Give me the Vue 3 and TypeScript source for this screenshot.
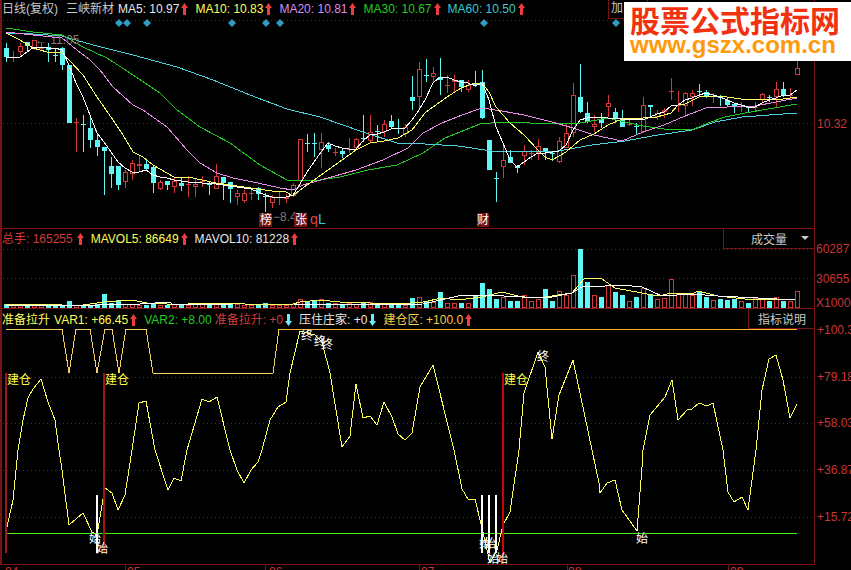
<script setup lang="ts">
type Kind = 'c' | 'r' | 'f'
type Candle = [number, number, number, number, Kind]

// high, body top, body bottom, low, kind (c cyan, r hollow red, f filled red)
const rawCandles: Candle[] = [
  [43,48,57,62,'c'],[51,57,57,62,'r'],[43,46,52,55,'r'],[42,42,46,52,'c'],[40,40,49,50,'r'],[43,47,49,50,'f'],
  [43,47,50,62,'c'],[48,55,55,62,'c'],[47,48,65,70,'c'],[65,65,123,123,'c'],[118,122,122,152,'r'],[115,124,124,152,'c'],
  [115,128,140,148,'c'],[133,140,147,156,'c'],[147,147,151,195,'c'],[157,166,174,188,'c'],[166,166,185,190,'c'],[170,172,182,188,'r'],
  [160,163,174,180,'r'],[155,164,166,172,'f'],[160,164,169,170,'c'],[166,167,183,193,'c'],[180,182,189,190,'r'],[181,181,185,190,'c'],
  [177,181,187,193,'r'],[178,183,186,191,'c'],[176,184,185,197,'f'],[178,184,187,197,'r'],[176,181,182,187,'f'],[182,184,184,195,'c'],
  [164,176,189,189,'r'],[177,177,183,200,'c'],[182,182,189,203,'c'],[190,193,197,205,'r'],[190,193,201,203,'r'],[190,193,193,200,'r'],
  [187,188,194,200,'c'],[193,196,196,212,'c'],[195,197,203,208,'r'],[192,197,197,205,'r'],[194,197,199,203,'r'],[183,185,196,197,'r'],
  [139,139,181,185,'r'],[134,143,143,152,'c'],[133,143,143,157,'c'],[133,142,150,168,'r'],[142,145,149,152,'c'],[148,152,152,156,'f'],
  [148,151,154,158,'c'],[138,149,149,153,'r'],[138,139,148,150,'r'],[115,138,138,142,'c'],[115,132,141,143,'r'],[125,131,131,142,'c'],
  [120,124,132,137,'r'],[115,121,127,128,'c'],[119,128,128,134,'c'],[124,127,134,137,'r'],[76,97,101,110,'c'],[62,69,97,110,'r'],
  [59,75,75,82,'c'],[67,73,77,83,'r'],[58,77,80,95,'c'],[75,85,85,93,'r'],[75,80,82,92,'f'],[80,80,87,92,'c'],
  [80,85,90,92,'r'],[71,84,84,87,'c'],[70,82,118,119,'c'],[140,140,170,170,'c'],[172,178,178,202,'c'],[145,160,167,178,'r'],
  [150,157,163,163,'c'],[165,166,168,173,'c'],[145,151,156,165,'r'],[150,153,153,160,'r'],[139,146,153,160,'r'],[148,148,152,160,'c'],
  [152,153,153,161,'c'],[137,141,162,163,'r'],[123,133,148,148,'r'],[83,95,133,137,'r'],[64,97,112,113,'c'],[102,113,122,123,'c'],
  [115,124,127,132,'r'],[113,119,123,128,'c'],[95,103,107,117,'r'],[108,112,118,123,'c'],[110,119,127,127,'c'],[120,124,124,126,'r'],
  [123,126,126,134,'c'],[97,105,132,133,'r'],[105,105,107,118,'c'],[110,113,117,120,'r'],[108,110,112,118,'f'],[78,91,91,100,'r'],
  [91,105,105,112,'r'],[92,93,106,117,'r'],[90,93,97,106,'r'],[84,91,91,97,'c'],[90,92,97,98,'c'],[93,96,96,103,'r'],
  [95,97,97,106,'c'],[97,100,105,107,'c'],[104,104,107,113,'c'],[102,106,106,112,'r'],[106,106,108,112,'c'],[102,107,107,112,'r'],
  [93,94,100,103,'r'],[95,97,97,102,'c'],[82,89,97,107,'r'],[82,89,95,97,'c'],[88,95,95,100,'r'],[61,68,75,75,'r'],
]

const stepX = (i: number) => 6 + i * 7

const candles = rawCandles.map(([high, top, bottom, low, kind], i) => ({
  x: stepX(i), high, top, bottom, low, kind,
}))

const maLines = [
  { color: '#4fd0dc', points: '6,33 33,34 62,36 93,45 133,55 177,67 213,80 250,95 287,109 320,117 363,132 397,143 425,144 458,146 492,151 525,152 558,151 592,145 625,141 658,135 692,130 715,122 742,117 797,113' },
  { color: '#22c522', points: '6,28 33,32 62,35 83,47 107,58 133,75 160,93 177,110 200,127 230,143 260,165 287,180 313,181 340,177 368,170 397,165 423,153 445,138 480,124 502,122 558,124 580,123 608,118 629,123 643,126 664,129 692,130 708,123 725,117 745,113 797,104' },
  { color: '#e88ce8', points: '6,32 33,35 62,38 77,50 90,60 100,70 113,87 133,105 143,110 167,127 187,150 200,163 217,173 233,178 258,183 280,188 293,190 303,185 328,178 356,170 383,160 408,148 423,133 442,123 462,115 482,108 502,111 524,115 552,122 573,128 594,135 622,141 643,132 664,125 685,116 706,108 727,107 755,106 776,102 797,98' },
  { color: '#ffff66', points: '6,33 20,40 33,48 47,52 62,53 69,60 83,75 97,97 113,120 123,135 133,152 143,157 153,165 167,173 174,177 188,177 202,180 216,183 230,185 244,187 258,189 272,191 286,192 293,196 300,190 314,180 328,170 342,160 356,150 370,143 384,141 398,138 412,130 425,113 433,107 447,97 461,88 475,83 482,83 489,92 496,107 503,115 510,123 524,135 538,150 545,157 552,160 566,152 580,140 594,134 608,125 622,119 636,118 643,118 657,117 664,115 671,113 678,105 685,104 699,97 713,96 727,97 741,99 755,99 769,99 783,99 797,97' },
  { color: '#ffffff', points: '6,57 13,57 20,57 27,52 34,47 41,47 48,48 55,48 62,50 69,65 76,83 83,97 90,115 97,133 104,142 111,152 118,162 125,168 132,172 139,172 146,170 153,175 160,177 167,178 174,180 181,181 188,182 195,182 202,183 209,183 216,184 223,185 230,186 237,187 244,188 251,189 258,192 265,195 272,197 279,197 286,197 293,195 300,184 307,172 314,162 321,152 328,143 335,146 342,148 349,149 356,149 363,141 370,135 377,134 384,132 391,129 398,128 405,128 412,120 419,110 425,100 433,83 440,77 447,77 454,80 461,82 468,83 475,86 482,83 489,100 496,127 503,143 510,160 517,167 524,162 531,157 538,153 545,153 552,152 559,151 566,145 573,130 580,120 587,118 594,117 601,117 608,118 615,118 622,119 629,119 636,119 643,120 650,117 657,114 664,112 671,106 678,105 685,100 692,98 699,95 706,93 713,95 720,97 727,100 734,103 741,105 748,107 755,107 762,103 769,100 776,98 783,95 790,95 797,90' },
]

const diamonds = [119, 127, 147, 232, 266, 280, 484, 616]

const volHeights = [
  4,3,3,3,3,3,3,2,2,7,3,3,3,4,14,5,8,4,4,3,3,4,3,3,4,3,3,4,4,3,4,4,4,4,3,3,4,5,3,3,3,4,9,7,7,9,5,5,4,5,4,6,6,4,5,5,3,3,10,11,
  7,6,16,5,5,5,5,13,25,19,9,11,7,7,13,7,9,19,7,17,13,33,59,26,13,11,23,16,13,7,11,20,13,9,10,29,14,14,13,17,11,8,9,8,9,7,5,10,10,7,11,7,7,17,
]
const volKinds = 'crrcrrcccc' + 'rccccccrrr' + 'ccrcrcrrrc' + 'rccrrrccrr' + 'rrrccrcrcr' + 'rcrcrccrcr'
  + 'crcrrcrccc' + 'crccrrrccr' + 'rrccrcrccr' + 'crcrrrrrrc' + 'crcccrcrrc' + 'rcrr'

const volBars = volHeights.map((h, i) => ({
  x: stepX(i),
  y: 308 - h,
  h,
  cyan: volKinds[i] === 'c',
}))

const mavol5 = '6,304 20,304 48,304 62,305 83,305 104,302 118,301 132,300 147,303 167,304 188,304 217,303 245,304 273,305 293,304 300,302 320,300 340,302 370,303 400,304 423,302 442,298 458,300 482,297 502,292 522,297 545,297 572,293 585,278 602,279 615,288 642,293 658,296 672,293 692,294 698,291 718,296 745,299 768,299 795,299'
const mavol10 = '6,305 48,305 87,306 110,304 140,304 170,302 173,305 233,304 293,304 333,305 423,304 458,296 482,295 525,297 552,297 572,293 582,287 605,286 622,285 642,287 662,296 692,294 718,296 758,298 795,300'

const guard = '6,329 62,329 69,373 76,329 90,329 97,373 105,329 112,329 119,373 126,329 146,329 153,373 273,373 279,329 797,329'
const var1 = '7,527 13,500 18,450 23,420 28,398 33,389 41,379 48,402 55,420 59,450 62,470 69,525 83,513 92,532 97,535 103,499 105,488 112,493 118,510 125,495 132,450 139,403 146,401 155,450 168,490 174,478 181,481 187,450 202,399 209,402 217,397 230,450 237,470 244,483 251,470 258,462 262,450 270,420 278,407 286,402 290,373 300,331 315,335 322,342 330,373 342,447 350,436 356,384 363,418 370,416 377,425 384,402 392,417 398,434 405,440 412,433 420,387 433,365 454,450 462,489 468,499 475,499 482,528 490,563 497,550 503,525 510,512 519,450 524,393 538,352 545,367 552,439 559,395 573,360 592,450 599,483 600,493 607,483 615,480 622,510 637,531 642,467 643,450 650,415 665,397 672,380 678,420 687,410 692,409 699,403 707,406 713,403 723,450 728,492 734,502 742,497 748,510 756,450 762,390 769,359 776,355 783,380 790,418 797,404'

const redBars = [
  { x: 5, bottom: 553, color: '#a31616' },
  { x: 103, bottom: 553, color: '#a31616' },
  { x: 502, bottom: 564, color: '#cc0606' },
]
const whiteBars = [97, 482, 489, 496]
const startMarks = [[89, 543], [96, 553], [479, 548], [484, 548], [487, 563], [496, 563], [636, 543]]
const endMarks = [[301, 340], [314, 346], [321, 349], [537, 361]]
const oscDots = [377, 423, 470, 517]
const oscAxis = [['+100.3', 334], ['+79.18', 381], ['+58.03', 427], ['+36.87', 474], ['+15.72', 521]]
const dates = [['04', 5], ['05', 127], ['06', 269], ['07', 421], ['08', 568], ['09', 730]]
const dateTicks = [125, 265, 419, 567, 728]

const topLegend = [
  { label: 'MA5:', value: '10.97', tone: 'white', arrow: 'up' },
  { label: 'MA10:', value: '10.83', tone: 'yellow', arrow: 'up' },
  { label: 'MA20:', value: '10.81', tone: 'pink', arrow: 'up' },
  { label: 'MA30:', value: '10.67', tone: 'green', arrow: 'up' },
  { label: 'MA60:', value: '10.50', tone: 'teal', arrow: 'up' },
]
const volLegend = [
  { label: '总手:', value: '165255', tone: 'red', arrow: 'up' },
  { label: 'MAVOL5:', value: '86649', tone: 'yellow', arrow: 'up' },
  { label: 'MAVOL10:', value: '81228', tone: 'white', arrow: 'up' },
]
const oscLegend = [
  { label: 'VAR1:', value: '+66.45', tone: 'yellow', arrow: 'up' },
  { label: 'VAR2:', value: '+8.00', tone: 'green', arrow: '' },
  { label: '准备拉升:', value: '+0', tone: 'red', arrow: 'down' },
  { label: '压住庄家:', value: '+0', tone: 'white', arrow: 'down' },
  { label: '建仓区:', value: '+100.0', tone: 'orange', arrow: 'up' },
]
</script>

<template>
  <div class="screen">
    <section class="pane pane-k">
      <svg class="chart" viewBox="0 0 851 229" width="851" height="229">
        <line class="dots" x1="3" x2="814" y1="20.5" y2="20.5" />
        <line class="dots" x1="3" x2="814" y1="123.5" y2="123.5" />
        <rect class="frame" x="0" y="0" width="2" height="229" />
        <rect class="frame" x="814" y="0" width="1" height="229" />
        <rect class="frame" x="0" y="228" width="814" height="1" />
        <polygon v-for="d in diamonds" :key="d" class="diamond" :points="`${d - 4},23 ${d},19 ${d + 4},23 ${d},27`" />

        <g v-for="c in candles" :key="c.x" class="crisp">
          <rect :class="c.kind === 'c' ? 'up-fill' : 'down-fill'" :x="c.x" :y="c.high" width="1" :height="c.low - c.high" />
          <rect
            v-if="c.kind === 'r' && c.bottom > c.top"
            class="hollow"
            :x="c.x - 1.5"
            :y="c.top + 0.5"
            width="4"
            :height="c.bottom - c.top - 1"
          />
          <rect
            v-else
            :class="c.kind === 'c' ? 'up-fill' : 'down-fill'"
            :x="c.x - 2"
            :y="c.top"
            width="5"
            :height="Math.max(c.bottom - c.top, 1)"
          />
        </g>

        <polyline v-for="l in maLines" :key="l.color" class="line" :stroke="l.color" :points="l.points" />

        <text class="note" x="35" y="44">← 11.05</text>
        <text class="note" x="273" y="221">−8.4</text>
        <g class="tags">
          <rect x="259" y="213" width="13" height="14" />
          <rect x="294" y="213" width="13" height="14" />
          <rect x="477" y="213" width="12" height="14" />
          <text x="260" y="224">榜</text>
          <text x="295" y="224">张</text>
          <text x="477" y="224">财</text>
        </g>
        <text class="mark-q" x="310" y="224">q</text>
        <text class="mark-l" x="318" y="224">L</text>
        <text class="axis" x="817" y="128">10.32</text>
      </svg>

      <div class="legend legend-top">
        <span class="title">日线(复权)</span>
        <span class="title title-name">三峡新材</span>
        <span v-for="item in topLegend" :key="item.label" class="item" :class="item.tone">
          <span>{{ item.label }} {{ item.value }}</span>
          <svg class="arrow" :class="item.arrow" viewBox="0 0 7 12" width="7" height="12"><path d="M3.5 0 L7 5 H5 V12 H2 V5 H0 Z" /></svg>
        </span>
      </div>
      <div class="tab-add">加</div>
    </section>

    <section class="pane pane-vol">
      <svg class="chart" viewBox="0 229 851 80" width="851" height="80">
        <line class="dots" x1="3" x2="814" y1="249.5" y2="249.5" />
        <line class="dots" x1="3" x2="814" y1="278.5" y2="278.5" />
        <rect class="frame" x="0" y="229" width="2" height="80" />
        <rect class="frame" x="814" y="229" width="1" height="80" />
        <rect class="frame" x="0" y="308" width="814" height="1" />
        <g class="crisp">
          <template v-for="b in volBars" :key="b.x">
            <rect v-if="b.cyan" class="up-fill" :x="b.x - 2" :y="b.y" width="5" :height="b.h" />
            <rect v-else class="hollow" :x="b.x - 1.5" :y="b.y + 0.5" width="4" :height="b.h - 1" />
          </template>
        </g>
        <polyline class="line" stroke="#ffff66" :points="mavol5" />
        <polyline class="line" stroke="#ffffff" :points="mavol10" />
        <text class="axis" x="816" y="253">60287</text>
        <text class="axis" x="816" y="283">30655</text>
        <text class="axis" x="816" y="307">X1000</text>
      </svg>
      <div class="legend legend-vol">
        <span v-for="item in volLegend" :key="item.label" class="item" :class="item.tone">
          <span>{{ item.label }} {{ item.value }}</span>
          <svg class="arrow" :class="item.arrow" viewBox="0 0 7 12" width="7" height="12"><path d="M3.5 0 L7 5 H5 V12 H2 V5 H0 Z" /></svg>
        </span>
      </div>
      <div class="tab tab-vol">成交量<i class="caret"></i></div>
    </section>

    <section class="pane pane-osc">
      <svg class="chart" viewBox="0 309 851 261" width="851" height="261">
        <line v-for="y in oscDots" :key="y" class="dots" x1="3" x2="814" :y1="y + 0.5" :y2="y + 0.5" />
        <rect class="frame" x="0" y="309" width="2" height="255" />
        <rect class="frame" x="814" y="309" width="1" height="255" />
        <rect class="frame" x="0" y="564" width="815" height="1" />
        <rect v-for="t in dateTicks" :key="t" class="frame" :x="t" y="564" width="1" height="6" />
        <rect class="floor-line" x="6" y="533" width="791" height="1" />
        <polyline class="line" stroke="#f2cf63" :points="guard" />
        <line class="top-line" x1="279" x2="797" y1="329.5" y2="329.5" />
        <polyline class="line" stroke="#ffff55" :points="var1" />
        <g class="crisp">
          <rect v-for="b in redBars" :key="b.x" :x="b.x" y="373" width="2" :height="b.bottom - 373" :fill="b.color" />
          <rect v-for="x in whiteBars" :key="x" :x="x - 1" y="495" width="2" height="58" fill="#fff" />
        </g>
        <text class="build" x="7" y="384">建仓</text>
        <text class="build" x="105" y="384">建仓</text>
        <text class="build" x="504" y="384">建仓</text>
        <text v-for="m in startMarks" :key="m[0]" class="sign" :x="m[0]" :y="m[1]">始</text>
        <text v-for="m in endMarks" :key="m[0]" class="sign" :x="m[0]" :y="m[1]">终</text>
        <text v-for="a in oscAxis" :key="a[0]" class="axis" x="817" :y="a[1]">{{ a[0] }}</text>
        <text v-for="d in dates" :key="d[0]" class="axis" :x="d[1]" y="576">{{ d[0] }}</text>
      </svg>
      <div class="legend legend-osc">
        <span class="title-yellow">准备拉升</span>
        <span v-for="item in oscLegend" :key="item.label" class="item" :class="item.tone">
          <span>{{ item.label }} {{ item.value }}</span>
          <svg v-if="item.arrow" class="arrow" :class="item.arrow" viewBox="0 0 7 12" width="7" height="12"><path d="M3.5 0 L7 5 H5 V12 H2 V5 H0 Z" /></svg>
        </span>
      </div>
      <div class="tab tab-osc">指标说明</div>
    </section>

    <aside class="stamp">
      <div class="stamp-name">股票公式指标网</div>
      <div class="stamp-url">www.gszx.com.cn</div>
    </aside>
  </div>
</template>

<style>
html, body { margin: 0; background: #000; }
</style>

<style scoped>
.screen { position: relative; width: 851px; height: 570px; overflow: hidden; background: #000; display: flex; flex-direction: column; font-family: "Liberation Sans", "Noto Sans CJK SC", sans-serif; font-size: 12px; }

/* Panes */
.pane { position: relative; flex: none; }
.pane-k { height: 229px; }
.pane-vol { height: 80px; }
.pane-osc { height: 261px; }
.chart { position: absolute; left: 0; top: 0; display: block; }

/* Legends */
.legend { position: relative; display: flex; align-items: center; gap: 7px; padding-left: 2px; white-space: nowrap; line-height: 14px; }
.legend-top { height: 17px; }
.legend-vol { height: 18px; padding-top: 1px; }
.legend-osc { height: 20px; padding-top: 1px; }
.legend-vol .item:first-child { gap: 4px; }
.legend-osc .item:nth-child(3) { margin-right: -4px; }
.title { color: #c9c9c9; margin-right: 1px; }
.title-name { margin-right: -3px; }
.title-yellow { color: #ffff66; margin-right: -3px; }
.item { display: inline-flex; align-items: center; gap: 2px; white-space: pre; }
.arrow { flex: none; }
.arrow.up { fill: #ee3b3b; }
.arrow.down { fill: #66eeff; transform: rotate(180deg); }
.white { color: #e8e8e8; }
.yellow { color: #ffff55; }
.pink { color: #de8cf0; }
.green { color: #22cc22; }
.teal { color: #38c8d0; }
.red { color: #d23c3c; }
.orange { color: #f4c84a; }

/* Tabs sitting over the chart */
.tab { position: absolute; box-sizing: border-box; border: 1px solid #761414; border-right: 0; background: #000; color: #c8c8c8; display: flex; align-items: center; }
.tab-vol { left: 723px; top: 0; width: 91px; height: 20px; border-top: 0; padding-left: 27px; }
.tab-osc { left: 748px; top: 0; width: 66px; height: 20px; border-top: 0; padding-left: 9px; }
.caret { position: absolute; left: 77px; top: 7px; width: 0; height: 0; border-left: 4px solid transparent; border-right: 4px solid transparent; border-top: 4px solid #ccc; }
.tab-add { position: absolute; left: 608px; top: 0; width: 40px; height: 19px; box-sizing: border-box; padding-left: 2px; border: 1px solid #761414; border-top: 0; color: #c8c8c8; line-height: 17px; }

/* Chart parts */
.frame { fill: #7a1414; }
.dots { stroke: #6e1a1a; stroke-width: 1; stroke-dasharray: 1 3; }
.diamond { fill: #2e9cc4; }
.crisp { shape-rendering: crispEdges; }
.up-fill { fill: #5ff6f6; }
.down-fill { fill: #d03a3a; }
.hollow { fill: #000; stroke: #d03a3a; stroke-width: 1; }
.line { fill: none; stroke-width: 1; shape-rendering: crispEdges; }
.floor-line { fill: #44ee11; }
.top-line { stroke: #ffb52e; stroke-width: 1; }
.axis { fill: #c83636; font-size: 12px; }
.note { fill: #7d7d7d; font-size: 12px; }
.tags rect { fill: #761212; }
.tags text { fill: #fff; font-size: 12px; }
.mark-q { fill: #e04040; font-size: 14px; }
.mark-l { fill: #30c8d8; font-size: 14px; }
.build { fill: #ffff44; font-size: 12px; }
.sign { fill: #fff; font-size: 12px; }

/* Site stamp */
.stamp { position: absolute; left: 624px; top: 2px; width: 227px; height: 59px; background: #fff; box-sizing: border-box; padding: 5px 0 0 6px; }
.stamp-name { color: #f2320f; font-size: 30px; font-weight: 700; line-height: 30px; white-space: nowrap; }
.stamp-url { color: #ff9a0a; font-size: 24px; font-weight: 700; line-height: 16px; white-space: nowrap; }
</style>
